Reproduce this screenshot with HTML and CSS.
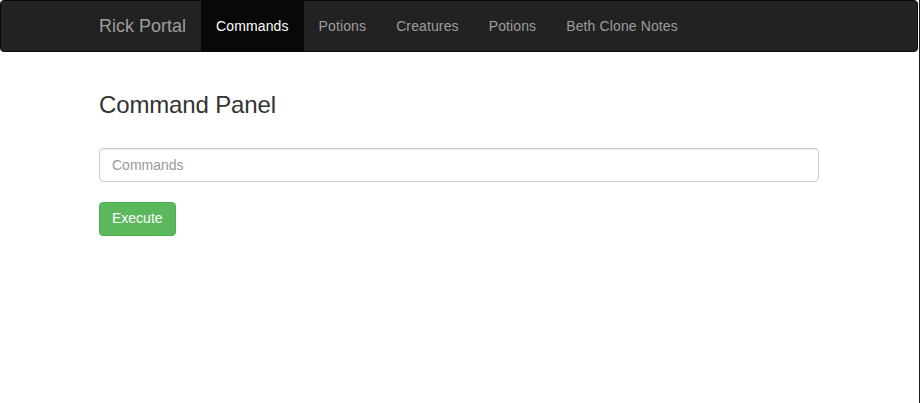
FILE: index.html
```html
<!DOCTYPE html>
<html>
<head>
<meta charset="utf-8">
<title>Rick Portal</title>
<link rel="stylesheet" href="styles.css">
</head>
<body>
<div class="page">
  <nav class="navbar">
    <div class="container nav-inner">
      <a class="brand" href="#">Rick Portal</a>
      <ul class="nav">
        <li><a class="active" href="#">Commands</a></li>
        <li><a href="#">Potions</a></li>
        <li><a href="#">Creatures</a></li>
        <li><a href="#">Potions</a></li>
        <li><a href="#">Beth Clone Notes</a></li>
      </ul>
    </div>
  </nav>
  <main class="container content">
    <h3 class="title">Command Panel</h3>
    <form class="form">
      <input class="input" type="text" placeholder="Commands">
      <button class="btn" type="button">Execute</button>
    </form>
  </main>
</div>
</body>
</html>
```
FILE: styles.css
```css
* { box-sizing: border-box; }
html, body { margin: 0; padding: 0; }
body {
  font-family: "Liberation Sans", Arial, sans-serif;
  font-size: 14px;
  line-height: 1.42857;
  color: #333;
  background: #fff;
  width: 920px;
  min-height: 100vh;
  border-right: 1px solid #1c1c1c;
}
.page {
  width: 918px;
}
.navbar {
  width: 918px;
  min-height: 52px;
  background: #222;
  border: 1px solid #080808;
  border-radius: 4px;
  margin-bottom: 20px;
}
.container {
  width: 750px;
  margin: 0 auto;
  padding: 0 15px;
}
.content {
  display: flow-root;
}
.nav-inner {
  display: flex;
  align-items: stretch;
  height: 50px;
}
.brand {
  display: block;
  margin-left: -15px;
  padding: 15px;
  font-size: 18px;
  line-height: 20px;
  height: 50px;
  color: #9d9d9d;
  text-decoration: none;
}
.nav {
  display: flex;
  list-style: none;
  margin: 0;
  padding: 0;
}
.nav a {
  display: block;
  padding: 15px;
  line-height: 20px;
  color: #9d9d9d;
  text-decoration: none;
  letter-spacing: 0.12px;
}
.nav a.active {
  background: #080808;
  color: #fff;
}
.title {
  font-size: 24px;
  font-weight: 500;
  line-height: 1.1;
  margin: 20px 0 30px;
  color: #333;
  letter-spacing: -0.15px;
}
.form {
  display: flex;
  flex-direction: column;
  align-items: flex-start;
  gap: 20px;
}
.input {
  display: block;
  width: 720px;
  height: 34px;
  padding: 6px 12px;
  font-family: inherit;
  font-size: 14px;
  line-height: 1.42857;
  color: #555;
  background: #fff;
  border: 1px solid #ccc;
  border-radius: 4px;
  box-shadow: inset 0 1px 1px rgba(0,0,0,.075);
}
.input::placeholder { color: #999; }
.btn {
  display: inline-block;
  padding: 6px 12px;
  font-family: inherit;
  font-size: 14px;
  line-height: 1.42857;
  color: #fff;
  background: #5cb85c;
  border: 1px solid #4cae4c;
  border-radius: 4px;
  cursor: pointer;
}
```
